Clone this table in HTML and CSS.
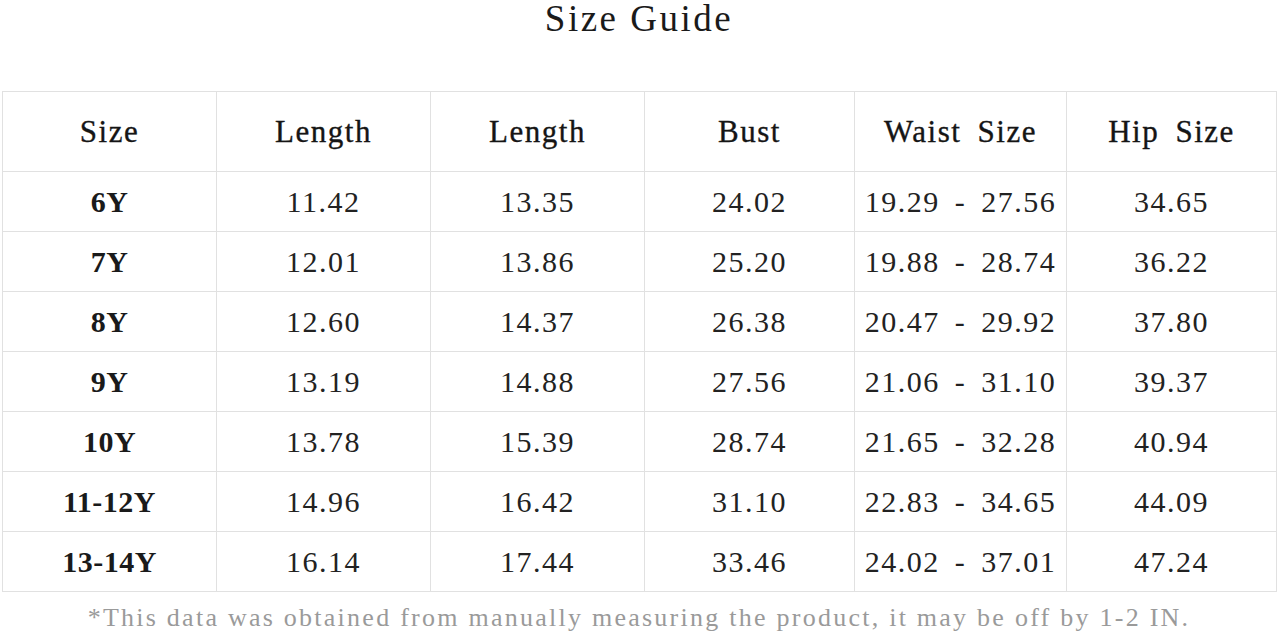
FILE: index.html
```html
<!DOCTYPE html>
<html lang="en">
<head>
<meta charset="utf-8">
<title>Size Guide</title>
<link rel="stylesheet" href="styles.css">
</head>
<body>
<div class="page">
  <h1 class="title">Size Guide</h1>
  <table class="sizes">
    <colgroup>
      <col class="c1"><col class="c2"><col class="c3"><col class="c4"><col class="c5"><col class="c6">
    </colgroup>
    <thead>
      <tr><th>Size</th><th>Length</th><th>Length</th><th>Bust</th><th>Waist Size</th><th>Hip Size</th></tr>
    </thead>
    <tbody>
      <tr><td class="lbl">6Y</td><td>11.42</td><td>13.35</td><td>24.02</td><td>19.29 - 27.56</td><td>34.65</td></tr>
      <tr><td class="lbl">7Y</td><td>12.01</td><td>13.86</td><td>25.20</td><td>19.88 - 28.74</td><td>36.22</td></tr>
      <tr><td class="lbl">8Y</td><td>12.60</td><td>14.37</td><td>26.38</td><td>20.47 - 29.92</td><td>37.80</td></tr>
      <tr><td class="lbl">9Y</td><td>13.19</td><td>14.88</td><td>27.56</td><td>21.06 - 31.10</td><td>39.37</td></tr>
      <tr><td class="lbl">10Y</td><td>13.78</td><td>15.39</td><td>28.74</td><td>21.65 - 32.28</td><td>40.94</td></tr>
      <tr><td class="lbl">11-12Y</td><td>14.96</td><td>16.42</td><td>31.10</td><td>22.83 - 34.65</td><td>44.09</td></tr>
      <tr><td class="lbl">13-14Y</td><td>16.14</td><td>17.44</td><td>33.46</td><td>24.02 - 37.01</td><td>47.24</td></tr>
    </tbody>
  </table>
  <p class="note">*This data was obtained from manually measuring the product, it may be off by 1-2 IN.</p>
</div>
</body>
</html>
```

FILE: styles.css
```css
html, body {
  margin: 0;
  padding: 0;
  background: #ffffff;
}

body {
  font-family: "Liberation Serif", "Noto Sans CJK SC", serif;
  color: #1e1e1e;
  width: 1278px;
  height: 633px;
  overflow: hidden;
}

.page {
  padding: 0 2px;
}

.title {
  margin: 0 0 53px;
  font-size: 37px;
  line-height: 38px;
  font-weight: normal;
  letter-spacing: 2.5px;
  text-align: center;
  color: #1a1a1a;
}

.sizes {
  width: 1274px;
  border-collapse: collapse;
  table-layout: fixed;
}

.c1, .c2, .c3 { width: 214px; }
.c4 { width: 210px; }
.c5 { width: 212px; }
.c6 { width: 210px; }

.sizes th,
.sizes td {
  border: 1px solid #e1e1e1;
  padding: 0;
  text-align: center;
  vertical-align: middle;
  white-space: nowrap;
}

.sizes th {
  height: 79px;
  font-size: 31px;
  font-weight: normal;
  letter-spacing: 1.5px;
  word-spacing: 7px;
  color: #151515;
  -webkit-text-stroke: 0.35px #151515;
}

.sizes td {
  height: 59px;
  font-size: 30px;
  letter-spacing: 1.5px;
  word-spacing: 6px;
  color: #222222;
}

.sizes td.lbl {
  font-weight: bold;
  letter-spacing: 0.5px;
  color: #1a1a1a;
}

.note {
  margin: 13px 0 0;
  font-size: 26px;
  line-height: 26px;
  letter-spacing: 2.25px;
  text-align: center;
  color: #9a9a9a;
}
```
